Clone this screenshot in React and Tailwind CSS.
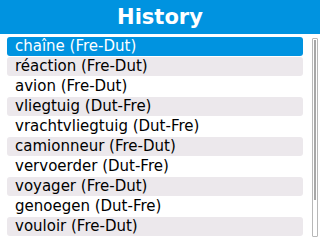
import React from 'react';

const items = [
  'chaîne (Fre-Dut)',
  'réaction (Fre-Dut)',
  'avion (Fre-Dut)',
  'vliegtuig (Dut-Fre)',
  'vrachtvliegtuig (Dut-Fre)',
  'camionneur (Fre-Dut)',
  'vervoerder (Dut-Fre)',
  'voyager (Fre-Dut)',
  'genoegen (Dut-Fre)',
  'vouloir (Fre-Dut)',
];

export default function App() {
  return (
    <div className="w-[320px] h-[240px] bg-white overflow-hidden" style={{ fontFamily: '"DejaVu Sans", sans-serif' }}>
      <div className="h-[34px] bg-[#0093e0] flex items-center justify-center">
        <h1 className="text-white font-bold text-[21px] leading-none">History</h1>
      </div>
      <div className="flex pt-[3px] pl-[7px]">
        <ul className="w-[296px] flex flex-col gap-[1px]">
          {items.map((item, i) => (
            <li
              key={item}
              className={
                i === 0
                  ? 'h-[19px] rounded-[3px] bg-[#0093e0] text-white text-[15px] leading-[19px] pl-[8px]'
                  : i % 2 === 1
                  ? 'h-[19px] rounded-[3px] bg-[#ece8ec] text-black text-[15px] leading-[19px] pl-[8px]'
                  : 'h-[19px] rounded-[3px] text-black text-[15px] leading-[19px] pl-[8px]'
              }
            >
              {item}
            </li>
          ))}
        </ul>
        {/* scrollbar */}
        <div className="ml-[9px] mt-[1px] w-[6px] h-[199px] border border-[#b8b8b8] rounded-[1px] p-[1px]">
          <div className="w-full h-[160px] bg-[#a8a8a8]" />
        </div>
      </div>
    </div>
  );
}
